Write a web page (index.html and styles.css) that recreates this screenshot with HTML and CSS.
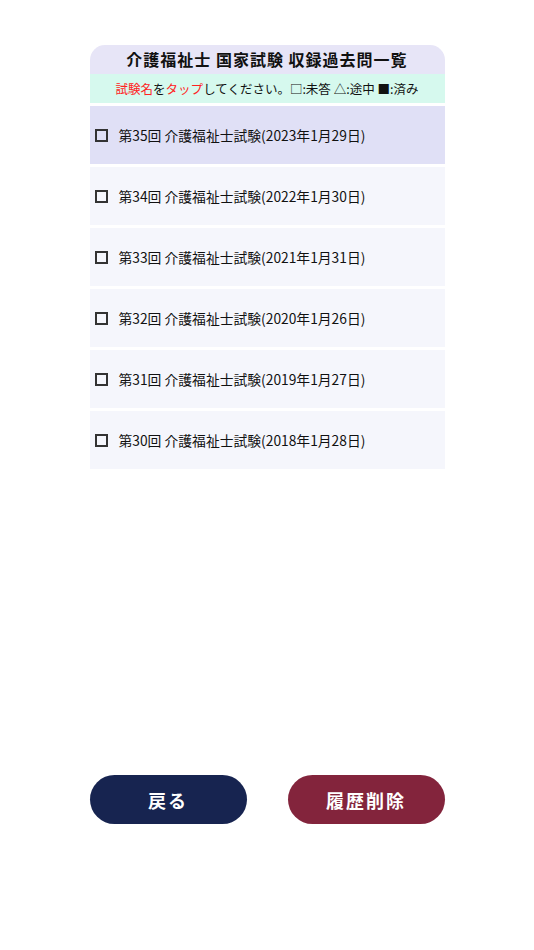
FILE: index.html
```html
<!DOCTYPE html>
<html>
<head>
  <meta charset="UTF-8">
  <title>介護福祉士 国家試験 収録過去問一覧</title>
  <link rel="stylesheet" href="styles.css">
</head>
<body>
  <div class="wrap">
    <div class="panel">
      <div class="panel-title">介護福祉士 国家試験 収録過去問一覧</div>
      <div class="panel-note"><span class="red">試験名</span>を<span class="red">タップ</span>してください。□:未答 △:途中 ■:済み</div>
      <ul class="exam-list">
        <li class="exam selected"><span class="box"></span>第35回 介護福祉士試験(2023年1月29日)</li>
        <li class="exam"><span class="box"></span>第34回 介護福祉士試験(2022年1月30日)</li>
        <li class="exam"><span class="box"></span>第33回 介護福祉士試験(2021年1月31日)</li>
        <li class="exam"><span class="box"></span>第32回 介護福祉士試験(2020年1月26日)</li>
        <li class="exam"><span class="box"></span>第31回 介護福祉士試験(2019年1月27日)</li>
        <li class="exam"><span class="box"></span>第30回 介護福祉士試験(2018年1月28日)</li>
      </ul>
    </div>

    <div class="actions">
      <button class="btn back">戻る</button>
      <button class="btn clear">履歴削除</button>
    </div>
  </div>
</body>
</html>
```

FILE: styles.css
```css
body {
  margin: 0;
  background-color: #fff;
  color: #111;
  font-family: "Noto Sans CJK JP", "Noto Sans", sans-serif;
}

.wrap {
  width: 355px;
  margin: 0 auto;
  padding-top: 45px;
}

.panel-title {
  height: 29px;
  line-height: 29px;
  text-align: center;
  font-size: 16px;
  font-weight: bold;
  letter-spacing: 1px;
  background-color: #e7e5f7;
  border-radius: 15px 15px 0 0;
}

.panel-note {
  height: 29px;
  line-height: 29px;
  text-align: center;
  font-size: 12.5px;
  background-color: #d6f9ee;
}

.red {
  color: #f22;
}

.exam-list {
  list-style: none;
  margin: 3px 0 0;
  padding: 0;
  display: flex;
  flex-direction: column;
  gap: 3px;
}

.exam {
  height: 58px;
  display: flex;
  align-items: center;
  padding-left: 5px;
  font-size: 13.8px;
  background-color: #f5f6fc;
}

.exam.selected {
  background-color: #e0e0f6;
}

.box {
  flex-shrink: 0;
  width: 9px;
  height: 9px;
  border: 2px solid #333;
  margin-right: 11px;
}

.actions {
  display: flex;
  justify-content: space-between;
  margin-top: 306px;
}

.btn {
  width: 157px;
  height: 49px;
  border: none;
  border-radius: 25px;
  color: #fff;
  font-family: "Noto Sans CJK JP", sans-serif;
  font-size: 18px;
  font-weight: bold;
  letter-spacing: 2px;
  cursor: pointer;
}

.back {
  background-color: #172450;
}

.clear {
  background-color: #83243c;
}
```
